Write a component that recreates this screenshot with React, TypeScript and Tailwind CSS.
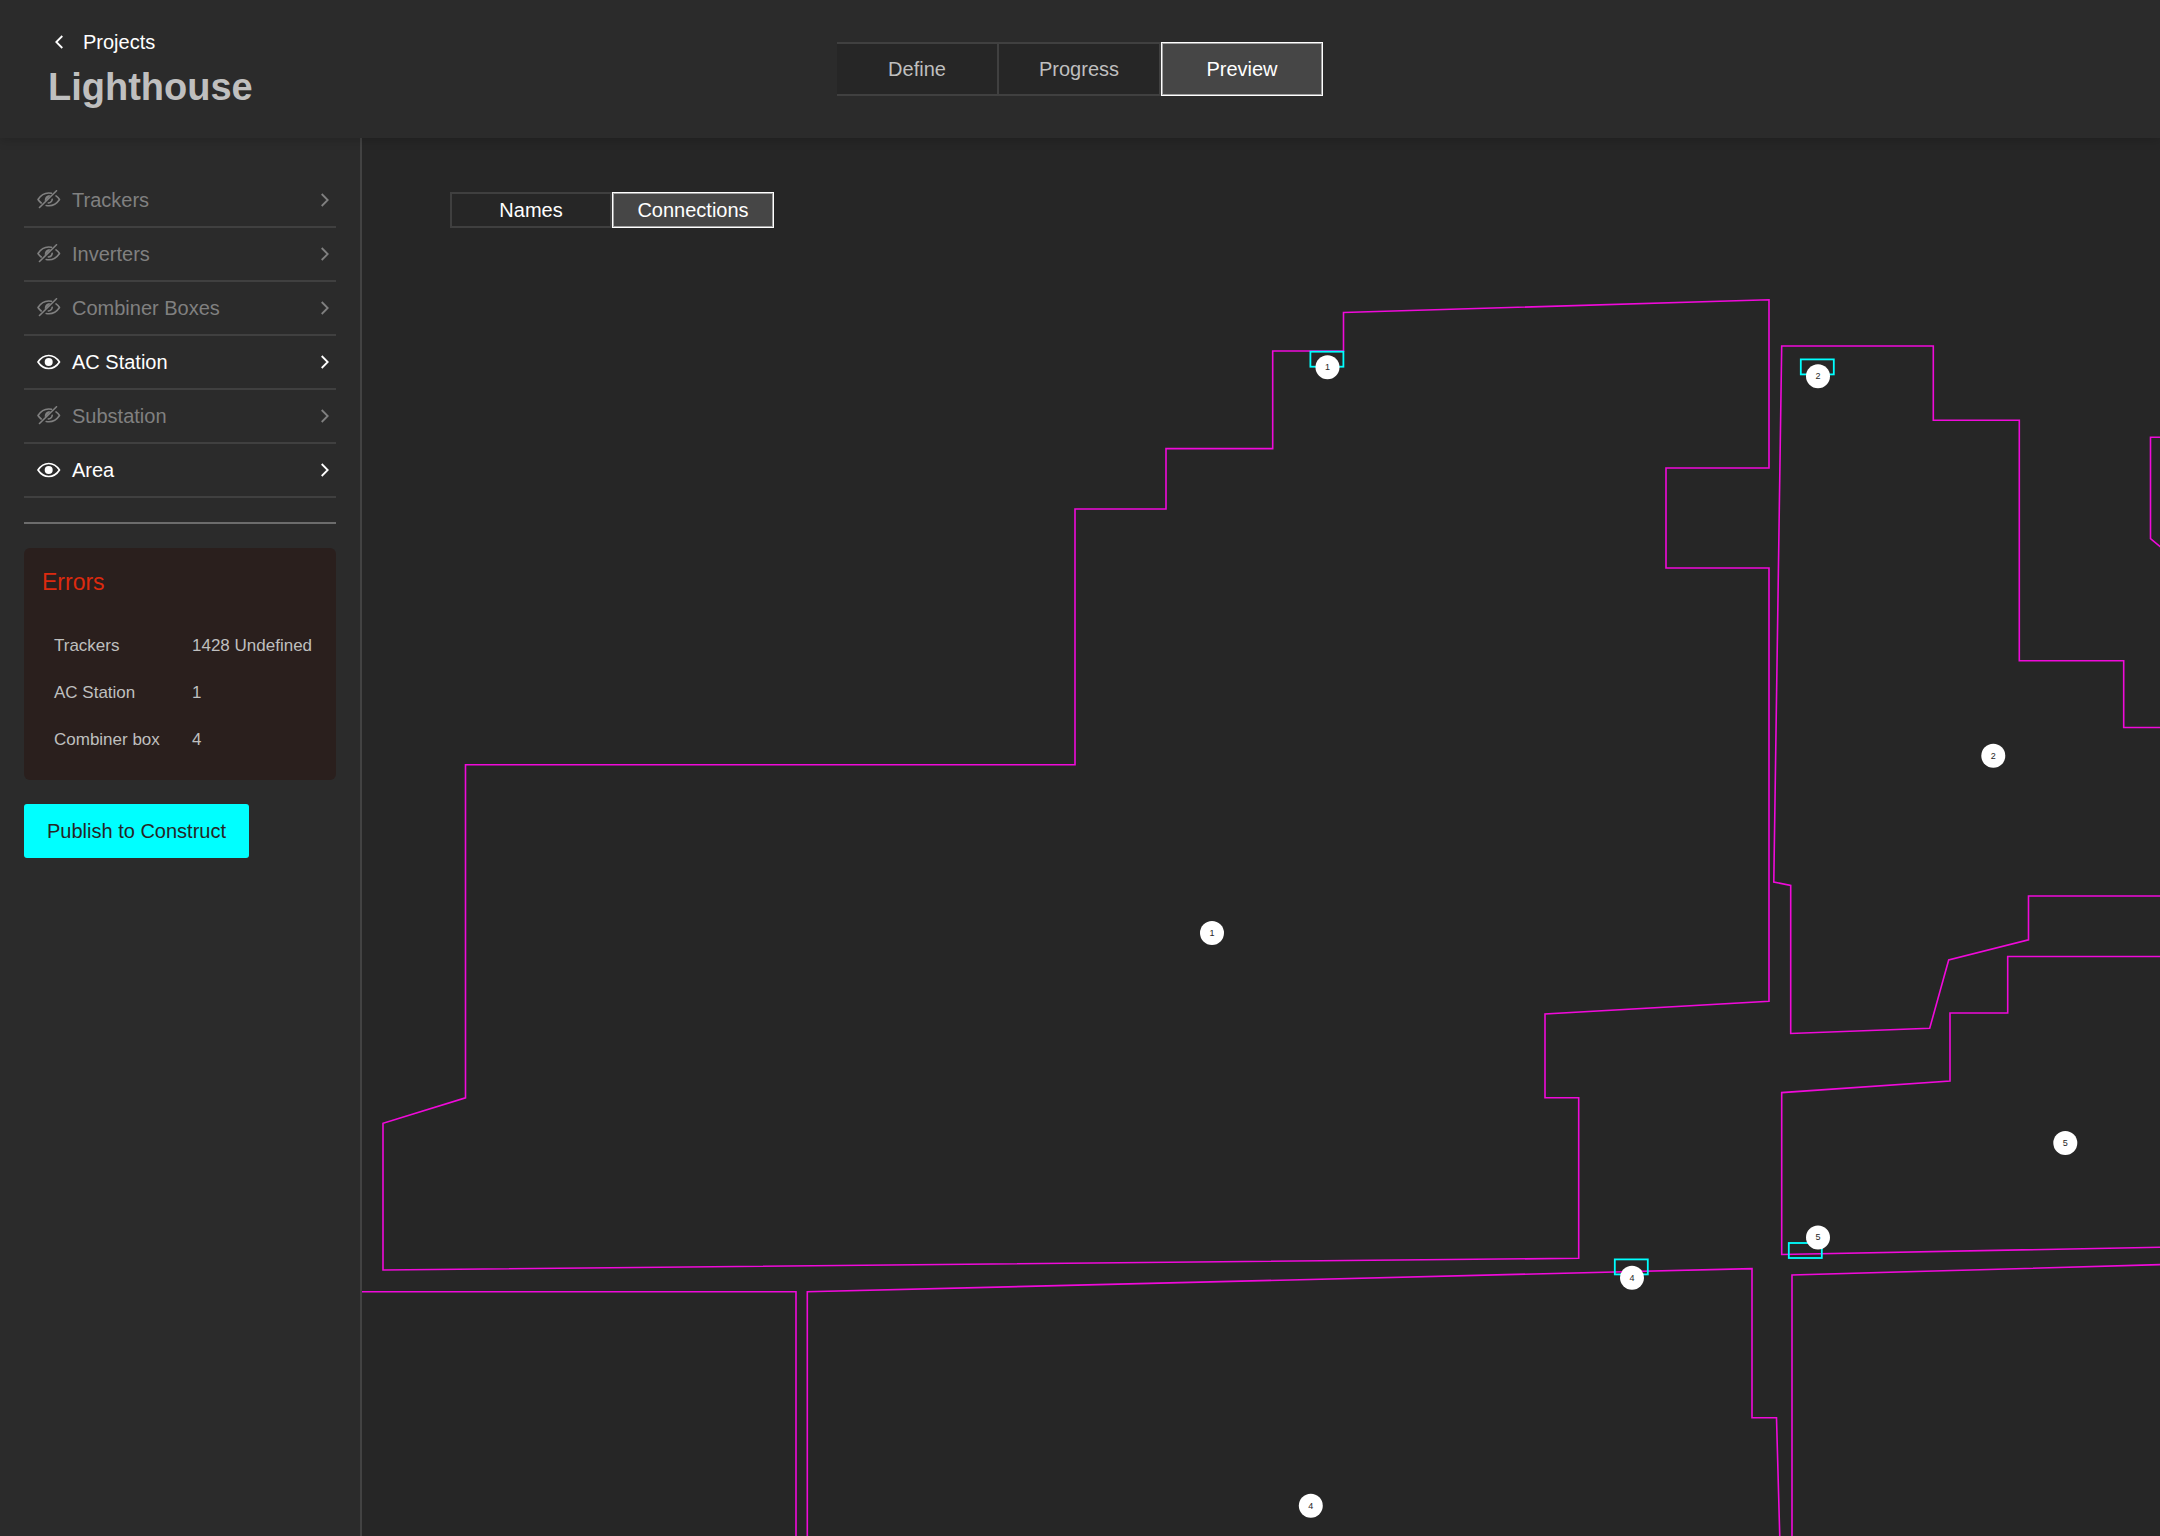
import React, { useState } from 'react';

const MODES = ['Define', 'Progress', 'Preview'];
const VIEWS = ['Names', 'Connections'];

const LAYERS = [
  { name: 'Trackers', visible: false },
  { name: 'Inverters', visible: false },
  { name: 'Combiner Boxes', visible: false },
  { name: 'AC Station', visible: true },
  { name: 'Substation', visible: false },
  { name: 'Area', visible: true },
];

const ERRORS = [
  { name: 'Trackers', value: '1428 Undefined' },
  { name: 'AC Station', value: '1' },
  { name: 'Combiner box', value: '4' },
];

// Site outlines, in plan coordinates
const AREAS = [
  '1343.5,312.5 1769,299.8 1769,468 1666,468 1666,568 1769,568 1769,1001.3 1545,1014 1545,1097.8 1578.7,1097.8 1578.7,1258.3 383,1270 383,1123.3 465.5,1097.8 465.5,764.8 1075,764.8 1075,509 1166,509 1166,448.6 1272.7,448.6 1272.7,351 1343.5,351',
  '1781.7,346 1933.3,346 1933.3,420.3 2019.3,420.3 2019.3,660.7 2123.7,660.7 2123.7,727.5 2200,727.5 2200,896 2028.5,896 2028.5,939.8 1948.7,960 1929.7,1028.3 1790.7,1033.5 1790.7,885.5 1773.8,882',
  '2200,437.2 2150.5,437.2 2150.5,538.7 2200,579',
  '2200,956.5 2007.7,956.5 2007.7,1013 1950,1013 1950,1081 1781.7,1092.6 1781.7,1254.5 2200,1246.5',
  '300,1291.8 796,1291.8 796,1600 300,1600',
  '807.3,1600 807.3,1291.8 1752,1268.6 1752,1417.7 1776.5,1417.7 1781.5,1600',
  '1792,1600 1792,1275 2200,1263.5 2200,1600',
];

const STATIONS = [
  { x: 1310.4, y: 351.7 },
  { x: 1800.8, y: 359.4 },
  { x: 1614.8, y: 1259.4 },
  { x: 1788.8, y: 1243 },
];

const PINS = [
  { x: 1327.5, y: 367.3, label: '1' },
  { x: 1818, y: 376.3, label: '2' },
  { x: 1632, y: 1277.8, label: '4' },
  { x: 1818, y: 1237.4, label: '5' },
  { x: 1212, y: 933, label: '1' },
  { x: 1993.3, y: 755.8, label: '2' },
  { x: 2065.3, y: 1143, label: '5' },
  { x: 1310.8, y: 1505.8, label: '4' },
];

function EyeIcon() {
  return (
    <svg width="24" height="20" viewBox="0 0 24 20" fill="none" stroke="currentColor" strokeWidth="1.7">
      <path d="M1 10C4 5.5 7.5 3.500 11.700 3.500S19.500 5.500 22.500 10C19.500 14.500 16 16.500 11.700 16.500S4 14.500 1 10Z" strokeLinejoin="round" />
      <circle cx="11.700" cy="10" r="4" fill="currentColor" stroke="none" />
    </svg>
  );
}

function EyeOffIcon() {
  return (
    <svg width="24" height="20" viewBox="0 0 24 20" fill="none" stroke="currentColor" strokeWidth="1.6" strokeLinecap="round" strokeLinejoin="round">
      <path d="M19.500 0.800L2.500 17.500" />
      <path d="M14.500 3.300C9 2.200 4.200 4.500 1 9.500c1 1.500 2 2.600 3.200 3.500" />
      <path d="M19 5.900C20.500 6.900 21.600 8 22.500 9.500c-3.200 4.800-8 7-13.300 6" />
      <path d="M13.600 5.600C10.200 4.500 7 7.500 7.900 11.400Z" fill="currentColor" stroke="none" />
      <path d="M15.200 9.300c-0.200 2.200-1.700 3.500-3.900 3.700" />
    </svg>
  );
}

function Chevron({ left = false }: { left?: boolean }) {
  return (
    <svg width="8" height="14" viewBox="0 0 8 14" fill="none" stroke="currentColor" strokeWidth="1.8">
      <path d={left ? 'M7.300 1L1.300 7l6 6' : 'M0.700 1l6 6-6 6'} />
    </svg>
  );
}

const ACTIVE_TAB = 'border border-white bg-[#464646] text-white shadow-[inset_0_0_0_1px_#a2a2a2]';

export default function App() {
  const [mode, setMode] = useState('Preview');
  const [view, setView] = useState('Connections');
  const [layers, setLayers] = useState(LAYERS);

  const toggleLayer = (name: string) =>
    setLayers(layers.map((l) => (l.name === name ? { ...l, visible: !l.visible } : l)));

  return (
    <div className="flex h-screen flex-col overflow-hidden bg-[#262626] font-['Liberation_Sans',Arial,sans-serif] text-[20px] leading-6 text-white">
      <header className="relative z-10 grid grid-cols-[1fr_auto_1fr] items-start bg-[#2b2b2b] px-12 pb-[30px] shadow-[0_2px_10px_rgba(0,0,0,0.18)]">
        <div className="pt-[30px]">
          <a href="#" className="flex items-center gap-5 pl-[7px]">
            <Chevron left />
            Projects
          </a>
          <h1 className="mt-3 text-[38px] leading-[42px] font-bold text-[#bfbfbf]">Lighthouse</h1>
        </div>
        <nav className="mt-[42px] flex">
          {MODES.map((m) => (
            <button
              key={m}
              onClick={() => setMode(m)}
              className={`h-[54px] w-[162px] ${m === mode ? ACTIVE_TAB : 'border-y-2 border-r-2 border-[#404040] bg-[#262626] text-[#bfbfbf]'}`}
            >
              {m}
            </button>
          ))}
        </nav>
      </header>

      <div className="flex min-h-0 flex-1">
        <aside className="w-[362px] shrink-0 border-r-2 border-[#424242] bg-[#2b2b2b] px-6 pt-9">
          <ul>
            {layers.map((layer) => (
              <li key={layer.name} className="border-b-2 border-[#404040]">
                <button
                  onClick={() => toggleLayer(layer.name)}
                  className={`flex h-[52px] w-full items-center pr-[7px] pl-[13px] ${layer.visible ? 'text-white' : 'text-[#808080]'}`}
                >
                  {layer.visible ? <EyeIcon /> : <EyeOffIcon />}
                  <span className="ml-[11px] flex-1 text-left">{layer.name}</span>
                  <Chevron />
                </button>
              </li>
            ))}
          </ul>

          <hr className="my-6 border-t-2 border-[#6c6c6c]" />

          <section className="rounded-md bg-[#2a1f1d] px-[18px] pt-5 pb-[17px]">
            <h2 className="text-[23px] leading-7 text-[#dc2a0f]">Errors</h2>
            <table className="mt-[26px] text-[17px] text-[#bfbfbf]">
              <tbody>
                {ERRORS.map((e) => (
                  <tr key={e.name} className="h-[47px]">
                    <th scope="row" className="w-[150px] pl-3 text-left font-normal">{e.name}</th>
                    <td className="whitespace-nowrap">{e.value}</td>
                  </tr>
                ))}
              </tbody>
            </table>
          </section>

          <button className="mt-6 h-[54px] w-[225px] rounded-[3px] bg-[#00ffff] text-[#262626]">Publish to Construct</button>
        </aside>

        <main className="relative min-w-0 flex-1 overflow-hidden pt-[54px] pl-[88px]">
          <svg className="absolute inset-0 h-full w-full" viewBox="362 138 1798 1398" preserveAspectRatio="xMinYMin slice">
            <g fill="none" stroke="#f00ada" strokeWidth="1.6">
              {AREAS.map((points) => (
                <polygon key={points} points={points} />
              ))}
            </g>
            <g fill="none" stroke="#00ffff" strokeWidth="1.8">
              {STATIONS.map((s) => (
                <rect key={s.x} x={s.x} y={s.y} width="33" height="15" />
              ))}
            </g>
            {PINS.map((p) => (
              <g key={`${p.x}-${p.y}`}>
                <circle cx={p.x} cy={p.y} r="12" fill="#fff" />
                <text x={p.x} y={p.y + 3} textAnchor="middle" fontSize="9" fill="#262626">{p.label}</text>
              </g>
            ))}
          </svg>

          <div className="relative flex">
            {VIEWS.map((v) => (
              <button
                key={v}
                onClick={() => setView(v)}
                className={`h-9 w-[162px] ${v === view ? ACTIVE_TAB : 'border-2 border-[#3f3f3f] bg-[#262626] text-white'}`}
              >
                {v}
              </button>
            ))}
          </div>
        </main>
      </div>
    </div>
  );
}
